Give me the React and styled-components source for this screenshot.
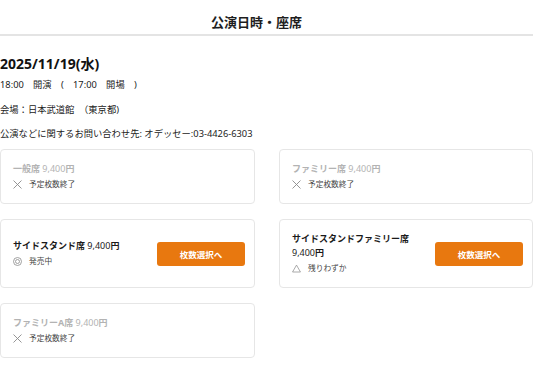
import React from "react";
import styled, { createGlobalStyle } from "styled-components";

const Global = createGlobalStyle`
  html, body { margin: 0; padding: 0; background: #fff; }
  body {
    font-family: "Noto Sans", "Noto Sans CJK JP", sans-serif;
    color: #222;
  }
`;

const Page = styled.div`
  width: 533px;
`;

const Header = styled.div`
  padding: 13px 20px 3px 0;
  border-bottom: 2px solid #e4e4e4;
  text-align: center;
`;

const Title = styled.h1`
  margin: 0;
  font-size: 13px;
  line-height: 18px;
  font-weight: 700;
  color: #1e1e1e;
`;

const DateHeading = styled.h2`
  margin: 18px 0 0;
  font-size: 14px;
  line-height: 20px;
  font-weight: 700;
  color: #111;
`;

const Info = styled.p`
  margin: ${(p) => p.$mt}px 0 0;
  font-size: 9.3px;
  line-height: 14px;
  color: #222;
`;

const Grid = styled.div`
  margin-top: 8px;
  display: grid;
  grid-template-columns: 255px 254px;
  column-gap: 24px;
  row-gap: 15px;
`;

const Card = styled.div`
  box-sizing: border-box;
  border: 1px solid #e6e6e6;
  border-radius: 4px;
  padding: 12px 9px 12px 12px;
  display: flex;
  align-items: center;
  justify-content: space-between;
  gap: 14px;
  min-height: 54px;
`;

const Body = styled.div`
  flex: 1;
  min-width: 0;
`;

const Name = styled.div`
  font-size: 9px;
  line-height: 14px;
  color: ${(p) => (p.$disabled ? "#b3b3b3" : "#1a1a1a")};
`;

const SeatName = styled.span`
  font-weight: 700;
`;

const Price = styled.span`
  font-weight: 400;
`;

const Yen = styled.span`
  font-weight: 700;
`;

const Status = styled.div`
  display: flex;
  align-items: center;
  gap: 7px;
  margin-top: 1px;
  font-size: 7.7px;
  line-height: 14px;
  color: #444;
`;

const Icon = styled.span`
  display: inline-flex;
  width: 9px;
  justify-content: center;
  line-height: 1;
`;

const Button = styled.button`
  flex: none;
  width: 88px;
  height: 24px;
  border: none;
  border-radius: 3px;
  background: #e8780f;
  color: #fff;
  font-family: "Noto Sans", "Noto Sans CJK JP", sans-serif;
  font-size: 8.5px;
  font-weight: 700;
  cursor: pointer;
`;

const Cross = () => (
  <svg width="9" height="9" viewBox="0 0 9 9">
    <path d="M0.5 0.5 L8.5 8.5 M8.5 0.5 L0.5 8.5" stroke="#8a8a8a" strokeWidth="0.9" fill="none" />
  </svg>
);

const Circle2 = () => (
  <svg width="9" height="9" viewBox="0 0 9 9">
    <circle cx="4.5" cy="4.5" r="4" stroke="#8a8a8a" strokeWidth="0.8" fill="none" />
    <circle cx="4.5" cy="4.5" r="2" stroke="#8a8a8a" strokeWidth="0.8" fill="none" />
  </svg>
);

const Triangle = () => (
  <svg width="10" height="9" viewBox="0 0 10 9">
    <path d="M5 0.7 L9.4 8.4 L0.6 8.4 Z" stroke="#8a8a8a" strokeWidth="0.8" fill="none" />
  </svg>
);

const icons = { sold: <Cross />, on: <Circle2 />, few: <Triangle /> };

const seats = [
  { name: "一般席", status: "sold", label: "予定枚数終了" },
  { name: "ファミリー席", status: "sold", label: "予定枚数終了" },
  { name: "サイドスタンド席", status: "on", label: "発売中" },
  { name: "サイドスタンドファミリー席", status: "few", label: "残りわずか" },
  { name: "ファミリーA席", status: "sold", label: "予定枚数終了" },
];

export default function App() {
  return (
    <Page>
      <Global />
      <Header>
        <Title>公演日時・座席</Title>
      </Header>
      <DateHeading>2025/11/19(水)</DateHeading>
      <Info $mt={4}>18:00　開演　(　17:00　開場　)</Info>
      <Info $mt={11}>会場：日本武道館　（東京都)</Info>
      <Info $mt={10}>公演などに関するお問い合わせ先: オデッセー:03-4426-6303</Info>
      <Grid>
        {seats.map((s) => {
          const disabled = s.status === "sold";
          return (
            <Card key={s.name}>
              <Body>
                <Name $disabled={disabled}>
                  <SeatName>{s.name}</SeatName> <Price>9,400</Price>
                  <Yen>円</Yen>
                </Name>
                <Status>
                  <Icon>{icons[s.status]}</Icon>
                  {s.label}
                </Status>
              </Body>
              {!disabled && <Button>枚数選択へ</Button>}
            </Card>
          );
        })}
      </Grid>
    </Page>
  );
}
